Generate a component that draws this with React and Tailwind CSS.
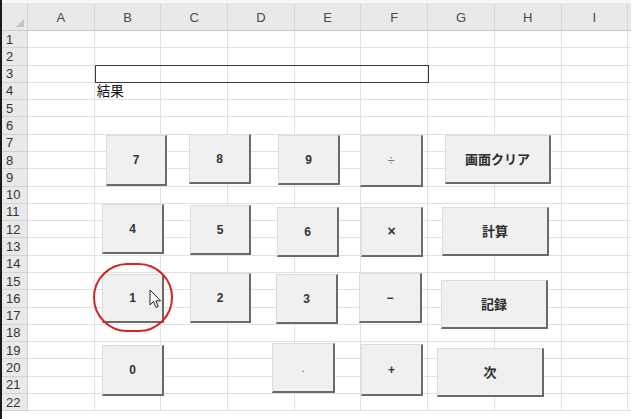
import React from 'react';

const COLS = ['A', 'B', 'C', 'D', 'E', 'F', 'G', 'H', 'I', ''];
const ROWS = Array.from({ length: 22 }, (_, i) => i + 1);

// ActiveX style buttons sitting on the sheet
const BUTTONS = [
  { t: '7', x: 106, y: 135, w: 61, h: 51 },
  { t: '8', x: 189, y: 134, w: 62, h: 50 },
  { t: '9', x: 278, y: 135, w: 62, h: 50 },
  { t: '÷', x: 360, y: 135, w: 63, h: 52, light: true },
  { t: '画面クリア', x: 445, y: 135, w: 106, h: 49, jp: true },
  { t: '4', x: 102, y: 204, w: 62, h: 50 },
  { t: '5', x: 190, y: 205, w: 61, h: 50 },
  { t: '6', x: 277, y: 207, w: 62, h: 50 },
  { t: '×', x: 361, y: 207, w: 62, h: 50, big: true },
  { t: '計算', x: 442, y: 207, w: 107, h: 49, jp: true },
  { t: '1', x: 102, y: 274, w: 62, h: 49 },
  { t: '2', x: 190, y: 273, w: 61, h: 50 },
  { t: '3', x: 276, y: 274, w: 62, h: 50 },
  { t: '−', x: 359, y: 273, w: 63, h: 50 },
  { t: '記録', x: 441, y: 280, w: 107, h: 49, jp: true },
  { t: '0', x: 102, y: 345, w: 62, h: 51 },
  { t: '.', x: 272, y: 343, w: 63, h: 50, light: true },
  { t: '+', x: 361, y: 344, w: 62, h: 52 },
  { t: '次', x: 437, y: 348, w: 107, h: 49, jp: true },
];

function SheetButton({ b }) {
  let cls = "text-[12px] font-bold text-[#333] [font-family:'Liberation_Sans',sans-serif]";
  if (b.jp) cls = "text-[13px] font-bold text-[#2b2b2b] [font-family:'Noto_Sans_CJK_JP','Liberation_Sans',sans-serif]";
  else if (b.light) cls = "text-[13px] text-[#777] [font-family:'Liberation_Sans',sans-serif]";
  else if (b.big) cls = "text-[14px] font-bold text-[#333] [font-family:'Liberation_Sans',sans-serif]";
  return (
    <div
      className="absolute flex items-center justify-center bg-[#f0f0f0] border-t border-l border-[#dcdcdc] border-r-2 border-b-2 border-r-[#6a6a6a] border-b-[#6a6a6a]"
      style={{ left: b.x, top: b.y, width: b.w, height: b.h }}
    >
      <span className={cls}>{b.t}</span>
    </div>
  );
}

export default function App() {
  return (
    <div className="relative w-[631px] h-[419px] overflow-hidden bg-white [font-family:'Liberation_Sans',sans-serif]">
      <div className="flex h-full">
        <div className="w-[2px] bg-[#1a1a1a] shrink-0" />
        <div className="flex flex-col flex-1">
          <div className="h-[3px] bg-[#f7f7f7]" />
          {/* column headers */}
          <div className="flex h-[28px] bg-[#e9e9e9] border-b border-[#c9c9c9]">
            <div className="w-[26px] shrink-0 border-r border-[#d2d2d2] flex items-end justify-end pr-[3px] pb-[3px]">
              <svg width="8" height="8" viewBox="0 0 8 8">
                <polygon points="8,0 8,8 0,8" fill="#c4c4c4" />
              </svg>
            </div>
            {COLS.map((c, i) => (
              <div
                key={i}
                className="w-[66.7px] shrink-0 border-r border-[#d6d6d6] flex items-center justify-center pt-[2px] text-[13px] text-[#4a4a4a]"
              >
                {c}
              </div>
            ))}
          </div>
          {/* rows */}
          {ROWS.map((r) => (
            <div key={r} className="flex h-[17.29px] shrink-0">
              <div className="w-[26px] shrink-0 bg-[#e9e9e9] border-r border-b border-[#d2d2d2] flex items-center pl-[4px] text-[13px] text-[#333] leading-none">
                {r}
              </div>
              {COLS.map((c, i) => (
                <div
                  key={i}
                  className="w-[66.7px] shrink-0 border-r border-b border-[#e1e1e1] flex items-center pl-[2px] leading-none"
                >
                  {r === 4 && c === 'B' && (
                    <span className="text-[13.5px] text-[#111] [font-family:'Noto_Sans_CJK_JP',sans-serif] whitespace-nowrap">結果</span>
                  )}
                </div>
              ))}
            </div>
          ))}
        </div>
      </div>

      {/* result cell B3:F3 border */}
      <div className="absolute left-[95px] top-[65px] w-[334px] h-[18px] border-[1.5px] border-[#3a3a3a]" />

      {BUTTONS.map((b) => (
        <SheetButton key={b.t} b={b} />
      ))}

      {/* red highlight around 1 */}
      <div className="absolute left-[93px] top-[263px] w-[80px] h-[69px] rounded-full border-2 border-[#d42424]" />

      {/* mouse pointer */}
      <svg className="absolute left-[149px] top-[289px]" width="13" height="20" viewBox="0 0 13 20">
        <path d="M1 1 L1 16 L4.5 12.5 L7 18.5 L9.3 17.5 L6.8 11.8 L11.5 11.8 Z" fill="#fff" stroke="#222" strokeWidth="1" strokeLinejoin="round" />
      </svg>
    </div>
  );
}
